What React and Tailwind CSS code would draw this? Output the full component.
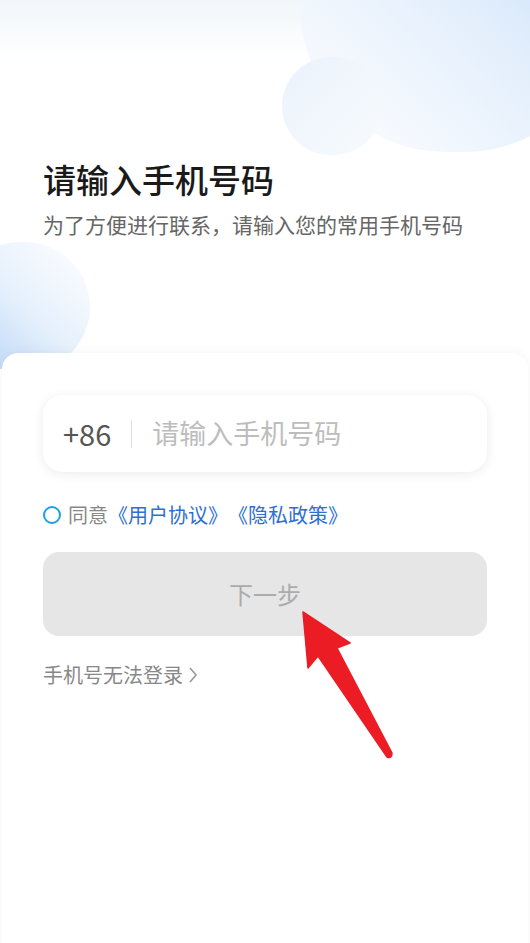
import React, { useState } from 'react';

const Arrow = () => (
  <svg className="absolute left-0 top-0 pointer-events-none" width="530" height="943" viewBox="0 0 530 943">
    <path
      d="M303 612 L350 643 L337 648 L392 753 Q392 759 387 757 L318 656 L308 668 Z"
      fill="#ec1c24"
      stroke="#ec1c24"
      strokeWidth="1.5"
      strokeLinejoin="round"
    />
  </svg>
);

const App = () => {
  const [agreed, setAgreed] = useState(false);
  const [phone, setPhone] = useState('');

  return (
    <div
      className="relative w-[530px] h-[943px] overflow-hidden bg-white [text-spacing-trim:space-all]"
      style={{ fontFamily: '"Noto Sans CJK SC", "Noto Sans", sans-serif' }}
    >
      {/* 背景装饰 */}
      <div className="absolute inset-x-0 top-0 h-[60px] bg-gradient-to-b from-[#f2f6fa] to-white" />
      <div className="absolute left-[300px] top-[-140px] w-[310px] h-[292px] rounded-full bg-gradient-to-bl from-[#bcd7f7] via-[#e4effc] to-white" />
      <div className="absolute left-[282px] top-[57px] w-[100px] h-[98px] rounded-full bg-gradient-to-br from-[#ebf2fb] to-[#f7fbfe]" />
      <div className="absolute left-[-45px] top-[242px] w-[135px] h-[130px] rounded-full bg-gradient-to-tr from-[#b0cff6] via-[#e5f0fc] to-white" />

      <div className="relative">
        <div className="px-[43px] pt-[157px]">
          <h1 className="text-[33px] leading-[44px] font-medium text-[#1a1a1a]">请输入手机号码</h1>
          <p className="mt-[8px] text-[21px] leading-[30px] text-[#666]">为了方便进行联系，请输入您的常用手机号码</p>
        </div>

        <div className="mt-[114px] mx-[2px] h-[600px] bg-white rounded-t-[16px] shadow-[0_-2px_8px_rgba(0,0,0,0.04)] px-[41px] pt-[42px]">
          <div className="h-[77px] rounded-[20px] bg-white shadow-[0_2px_12px_rgba(0,0,0,0.08)] flex items-center pl-[20px]">
            <span className="text-[29px] text-[#555]">+86</span>
            <div className="w-px h-[28px] bg-[#ddd] ml-[20px] mr-[20px]" />
            <input
              value={phone}
              onChange={(e) => setPhone(e.target.value)}
              placeholder="请输入手机号码"
              className="flex-1 bg-transparent outline-none text-[27px] text-[#333] placeholder:text-[#bdbdbd]"
            />
          </div>

          <div className="mt-[28px] flex items-center h-[30px]">
            <button
              onClick={() => setAgreed(!agreed)}
              className={`w-[18px] h-[18px] rounded-full border-2 border-[#1ba1e8] ${agreed ? 'bg-[#1ba1e8]' : ''}`}
            />
            <span className="ml-[7px] text-[20px] text-[#888]">同意</span>
            <span className="text-[20px] text-[#2d6fd3]">《用户协议》《隐私政策》</span>
          </div>

          <button className="mt-[22px] w-full h-[84px] rounded-[16px] bg-[#e6e6e6] text-[24px] text-[#ababab]">
            下一步
          </button>

          <div className="mt-[24px] flex items-center text-[20px] text-[#888]">
            <span>手机号无法登录</span>
            <svg className="ml-[4px]" width="12" height="22" viewBox="0 0 12 22">
              <path d="M3 4 L9 11 L3 18" fill="none" stroke="#999" strokeWidth="1.6" />
            </svg>
          </div>
        </div>
      </div>

      <Arrow />
    </div>
  );
};

export default App;
